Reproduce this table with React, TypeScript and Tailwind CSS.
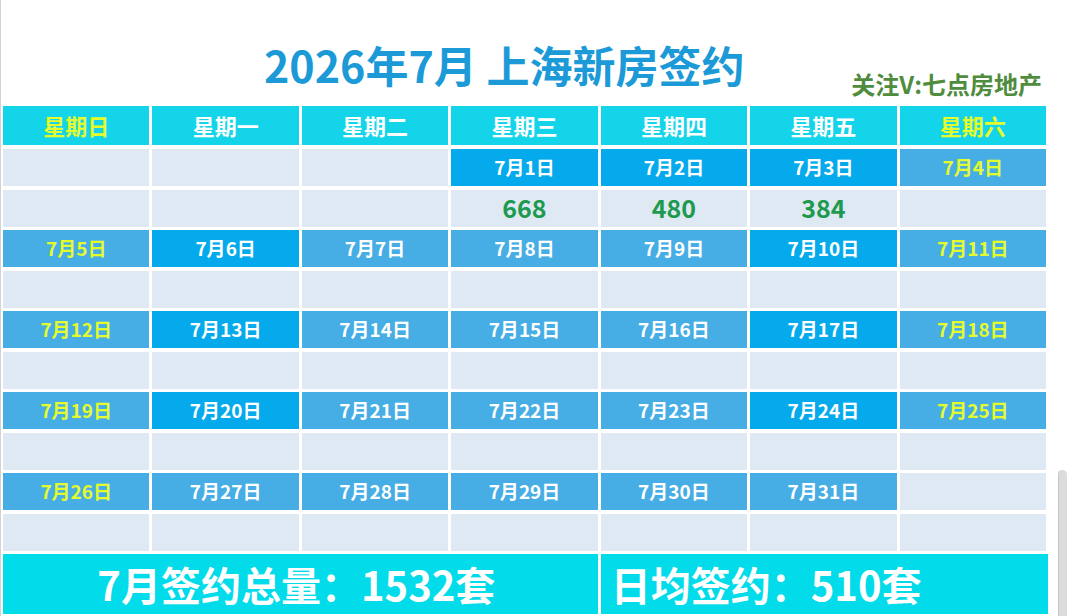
const BRIGHT = "bg-[#05aaec]"
const SOFT = "bg-[#47ade5]"

type Cell = { d: number; bright?: boolean; weekend?: boolean } | null

const weeks: { dates: Cell[]; values: (number | null)[] }[] = [
  {
    dates: [null, null, null, { d: 1, bright: true }, { d: 2, bright: true }, { d: 3, bright: true }, { d: 4, weekend: true }],
    values: [null, null, null, 668, 480, 384, null],
  },
  {
    dates: [
      { d: 5, weekend: true }, { d: 6, bright: true }, { d: 7 }, { d: 8 }, { d: 9 }, { d: 10, bright: true }, { d: 11, weekend: true },
    ],
    values: [null, null, null, null, null, null, null],
  },
  {
    dates: [
      { d: 12, weekend: true }, { d: 13, bright: true }, { d: 14 }, { d: 15 }, { d: 16 }, { d: 17, bright: true }, { d: 18, weekend: true },
    ],
    values: [null, null, null, null, null, null, null],
  },
  {
    dates: [
      { d: 19, weekend: true }, { d: 20, bright: true }, { d: 21 }, { d: 22 }, { d: 23 }, { d: 24, bright: true }, { d: 25, weekend: true },
    ],
    values: [null, null, null, null, null, null, null],
  },
  {
    dates: [{ d: 26, weekend: true }, { d: 27 }, { d: 28 }, { d: 29 }, { d: 30 }, { d: 31 }, null],
    values: [null, null, null, null, null, null, null],
  },
]

const headers = ["星期日", "星期一", "星期二", "星期三", "星期四", "星期五", "星期六"]

export default function App() {
  return (
    <div className="relative w-[1080px] h-[616px] bg-white overflow-hidden flex font-['Noto_Sans_CJK_SC',sans-serif]">
      {/* left edge line */}
      <div className="w-px h-full bg-[#d2d2d2]" />

      <div className="ml-[2px] w-[1043px] flex flex-col">
        {/* Title */}
        <div className="h-[106px] flex items-start">
          <h1 className="ml-[261px] mt-[43px] text-[43px] leading-none font-bold text-[#1b9ad7] whitespace-nowrap">
            2026年7月 上海新房签约
          </h1>
          <div className="ml-auto mr-[4px] mt-[72px] text-[24px] leading-none font-bold text-[#4f8c3d] whitespace-nowrap">
            关注V:七点房地产
          </div>
        </div>

        {/* Calendar grid */}
        <div className="grid grid-cols-7 gap-x-[3px] gap-y-[3.5px]">
          {headers.map((h, i) => (
            <div
              key={h}
              className={`h-[39px] mb-[0.5px] bg-[#14d4e9] flex items-center justify-center text-[22px] font-bold ${
                i === 0 || i === 6 ? "text-[#e4fb2c]" : "text-white"
              }`}
            >
              {h}
            </div>
          ))}

          {weeks.map((w, wi) => (
            <>
              {w.dates.map((c, i) =>
                c ? (
                  <div
                    key={`d${wi}-${i}`}
                    className={`h-[37px] flex items-center justify-center text-[19px] font-bold ${
                      c.bright ? BRIGHT : SOFT
                    } ${c.weekend ? "text-[#e4fb2c]" : "text-white"}`}
                  >
                    7月{c.d}日
                  </div>
                ) : (
                  <div key={`d${wi}-${i}`} className="h-[37px] bg-[#dfe9f4]" />
                )
              )}
              {w.values.map((v, i) => (
                <div
                  key={`v${wi}-${i}`}
                  className="h-[37px] bg-[#dfe9f4] flex items-center justify-center text-[25px] font-bold text-[#1d9a4e]"
                >
                  {v ?? ""}
                </div>
              ))}
            </>
          ))}

          {/* Summary */}
          <div className="col-span-4 h-[60px] bg-[#02dbe9] flex items-center justify-center pr-[8px] text-[40px] font-bold text-white whitespace-nowrap">
            7月签约总量：1532套
          </div>
          <div className="col-span-3 -mr-[2px] h-[60px] bg-[#02dbe9] flex items-center pl-[10px] text-[40px] font-bold text-white whitespace-nowrap">
            日均签约：510套
          </div>
        </div>
      </div>

      {/* scrollbar overlay */}
      <div className="absolute left-[1058px] top-[470px] w-[9px] h-[150px] rounded-t-full bg-[#dcdcdc] border-l border-[#c6c6c6]" />
    </div>
  )
}
